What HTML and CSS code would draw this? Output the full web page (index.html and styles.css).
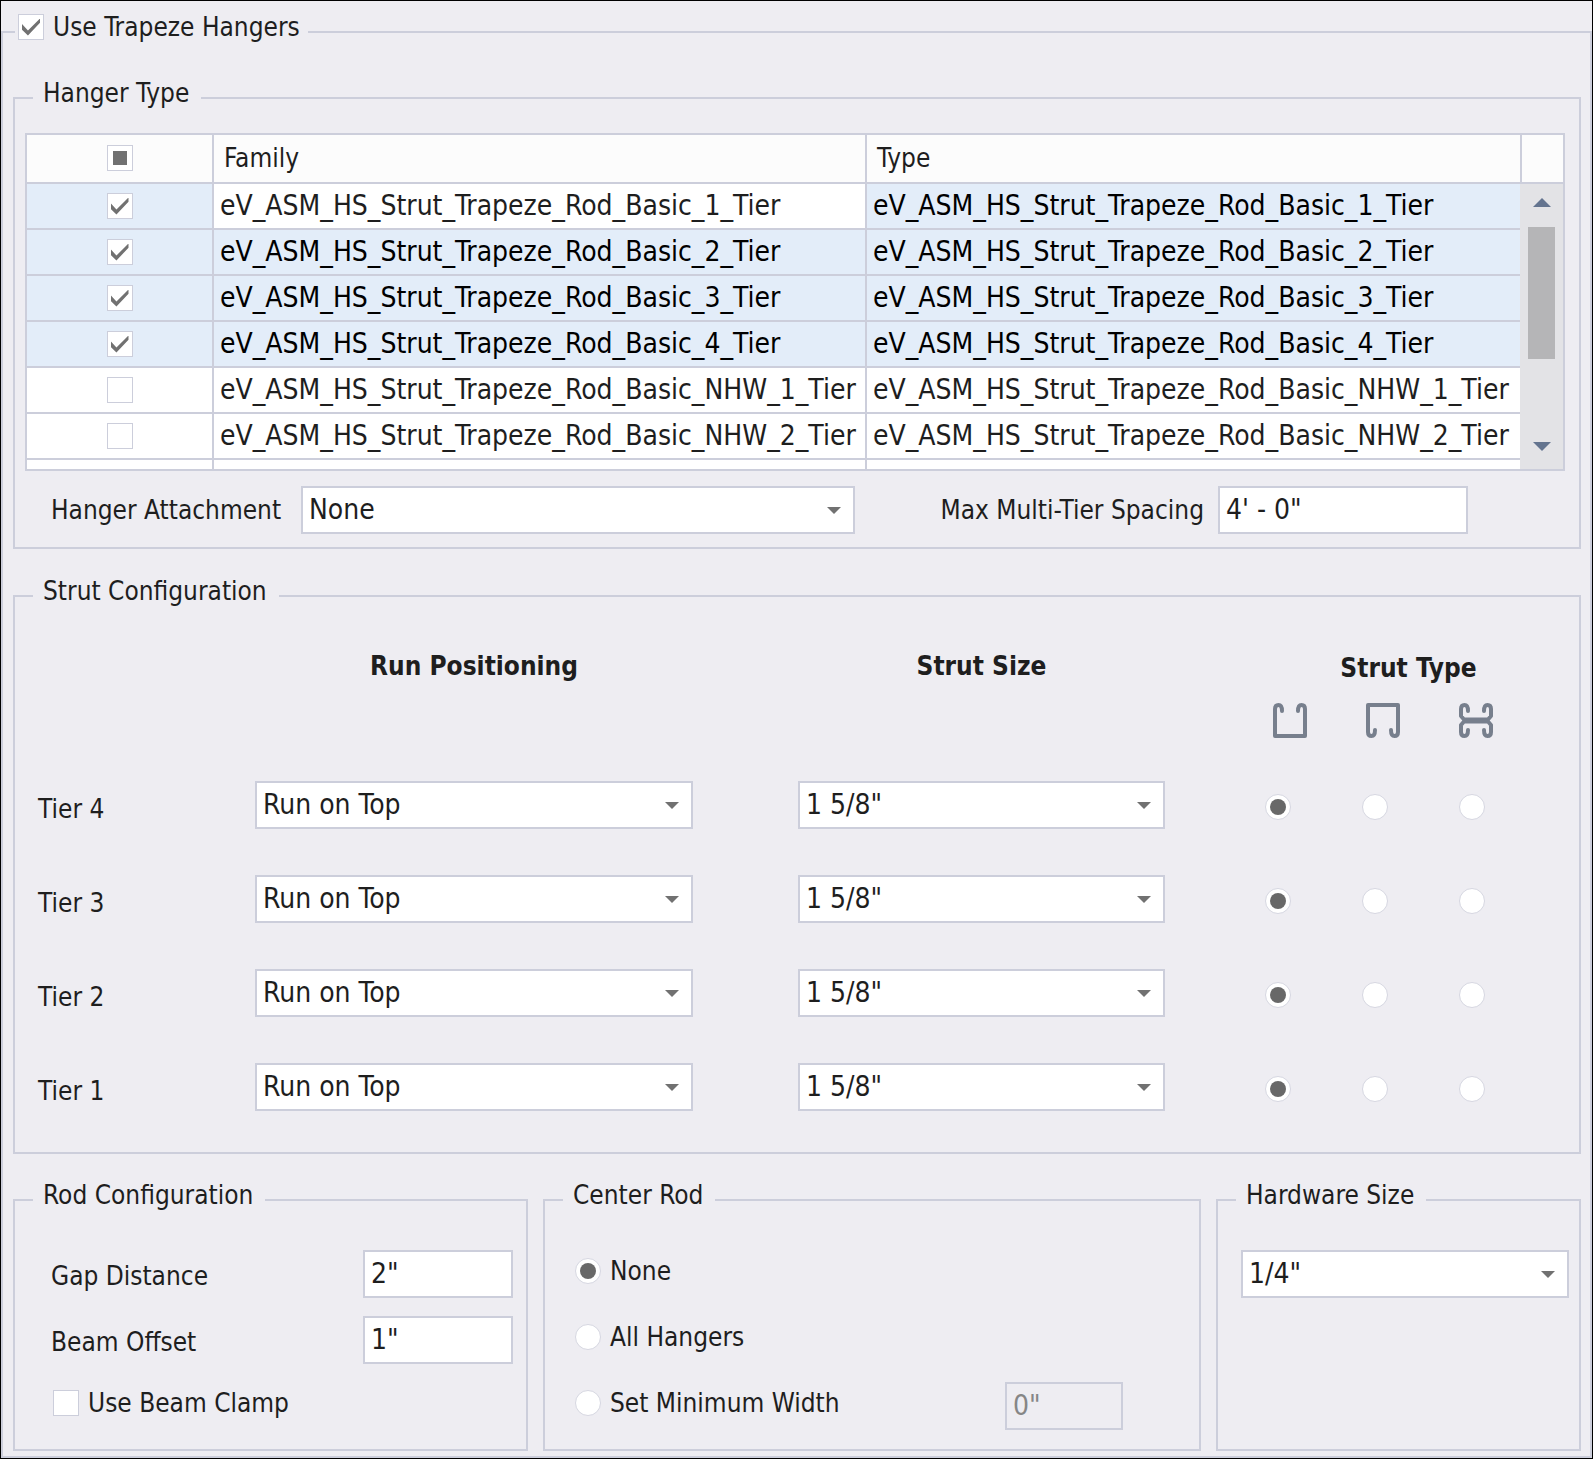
FILE: index.html
```
<!DOCTYPE html>
<html lang="en">
<head>
    <meta charset="UTF-8">
    <meta name="viewport" content="width=device-width, initial-scale=1.0">
    <title>Trapeze Hangers</title>
    <link rel="stylesheet" href="styles.css">
</head>
<body>
    <fieldset class="group main">
        <legend class="legend legend-check">
            <label class="choice"><input type="checkbox" class="check" checked>Use Trapeze Hangers</label>
        </legend>

        <fieldset class="group hanger-type">
            <legend class="legend">Hanger Type</legend>
            <div class="content">
                <div class="list">
                    <div class="list-rows">
                        <table class="families">
                            <thead>
                                <tr>
                                    <th class="col-check"><input type="checkbox" class="check mixed" aria-label="Select all"></th>
                                    <th>Family</th>
                                    <th>Type</th>
                                </tr>
                            </thead>
                            <tbody>
                                <tr class="selected">
                                    <td class="col-check"><input type="checkbox" class="check" aria-label="Basic 1 Tier" checked></td>
                                    <td class="focused">eV_ASM_HS_Strut_Trapeze_Rod_Basic_1_Tier</td>
                                    <td>eV_ASM_HS_Strut_Trapeze_Rod_Basic_1_Tier</td>
                                </tr>
                                <tr class="selected">
                                    <td class="col-check"><input type="checkbox" class="check" aria-label="Basic 2 Tier" checked></td>
                                    <td>eV_ASM_HS_Strut_Trapeze_Rod_Basic_2_Tier</td>
                                    <td>eV_ASM_HS_Strut_Trapeze_Rod_Basic_2_Tier</td>
                                </tr>
                                <tr class="selected">
                                    <td class="col-check"><input type="checkbox" class="check" aria-label="Basic 3 Tier" checked></td>
                                    <td>eV_ASM_HS_Strut_Trapeze_Rod_Basic_3_Tier</td>
                                    <td>eV_ASM_HS_Strut_Trapeze_Rod_Basic_3_Tier</td>
                                </tr>
                                <tr class="selected">
                                    <td class="col-check"><input type="checkbox" class="check" aria-label="Basic 4 Tier" checked></td>
                                    <td>eV_ASM_HS_Strut_Trapeze_Rod_Basic_4_Tier</td>
                                    <td>eV_ASM_HS_Strut_Trapeze_Rod_Basic_4_Tier</td>
                                </tr>
                                <tr>
                                    <td class="col-check"><input type="checkbox" class="check" aria-label="Basic NHW 1 Tier"></td>
                                    <td>eV_ASM_HS_Strut_Trapeze_Rod_Basic_NHW_1_Tier</td>
                                    <td>eV_ASM_HS_Strut_Trapeze_Rod_Basic_NHW_1_Tier</td>
                                </tr>
                                <tr>
                                    <td class="col-check"><input type="checkbox" class="check" aria-label="Basic NHW 2 Tier"></td>
                                    <td>eV_ASM_HS_Strut_Trapeze_Rod_Basic_NHW_2_Tier</td>
                                    <td>eV_ASM_HS_Strut_Trapeze_Rod_Basic_NHW_2_Tier</td>
                                </tr>
                                <tr>
                                    <td class="col-check"></td>
                                    <td></td>
                                    <td></td>
                                </tr>
                            </tbody>
                        </table>
                    </div>
                    <div class="list-side">
                        <div class="side-head"></div>
                        <div class="scrollbar">
                            <button type="button" class="scroll-up" aria-label="Scroll up"></button>
                            <div class="thumb"></div>
                            <button type="button" class="scroll-down" aria-label="Scroll down"></button>
                        </div>
                    </div>
                </div>
                <div class="attachment">
                    <label for="attachment">Hanger Attachment</label>
                    <div class="select">
                        <select id="attachment"><option>None</option></select>
                    </div>
                    <label for="spacing" class="label-right">Max Multi-Tier Spacing</label>
                    <input type="text" id="spacing" class="text" value="4' - 0&quot;">
                </div>
            </div>
        </fieldset>

        <fieldset class="group strut">
            <legend class="legend">Strut Configuration</legend>
            <div class="content">
                <div class="strut-row strut-head">
                    <div class="head col-run">Run Positioning</div>
                    <div class="head col-size">Strut Size</div>
                    <div class="col-type">
                        <div class="head head-type">Strut Type</div>
                        <div class="icons">
                            <svg class="icon" viewBox="0 0 34 35">
                                <path d="M9 8C9 4 8 2 5.5 2S2 3.5 2 6V33H32V6C32 3.5 31 2 28.5 2S25 4 25 8"/>
                            </svg>
                            <svg class="icon" viewBox="0 0 34 35">
                                <path d="M9 27C9 31 8 33 5.5 33S2 31.5 2 29V2H32V29C32 31.5 31 33 28.5 33S25 31 25 27"/>
                            </svg>
                            <svg class="icon" viewBox="0 0 34 35">
                                <path d="M9 8C9 4 8 2 5.5 2S2 3.5 2 6V13L5 16.5H29L32 13V6C32 3.5 31 2 28.5 2S25 4 25 8"/>
                                <path d="M9 27C9 31 8 33 5.5 33S2 31.5 2 29V22L5 18.5H29L32 22V29C32 31.5 31 33 28.5 33S25 31 25 27"/>
                            </svg>
                        </div>
                    </div>
                </div>
                <div class="strut-row">
                    <label for="run4" class="tier">Tier 4</label>
                    <div class="select col-run"><select id="run4"><option>Run on Top</option></select></div>
                    <div class="select col-size"><select aria-label="Tier 4 strut size"><option>1 5/8"</option></select></div>
                    <div class="col-type radios">
                        <input type="radio" class="radio" name="type4" aria-label="Open up" checked>
                        <input type="radio" class="radio" name="type4" aria-label="Open down">
                        <input type="radio" class="radio" name="type4" aria-label="Back to back">
                    </div>
                </div>
                <div class="strut-row">
                    <label for="run3" class="tier">Tier 3</label>
                    <div class="select col-run"><select id="run3"><option>Run on Top</option></select></div>
                    <div class="select col-size"><select aria-label="Tier 3 strut size"><option>1 5/8"</option></select></div>
                    <div class="col-type radios">
                        <input type="radio" class="radio" name="type3" aria-label="Open up" checked>
                        <input type="radio" class="radio" name="type3" aria-label="Open down">
                        <input type="radio" class="radio" name="type3" aria-label="Back to back">
                    </div>
                </div>
                <div class="strut-row">
                    <label for="run2" class="tier">Tier 2</label>
                    <div class="select col-run"><select id="run2"><option>Run on Top</option></select></div>
                    <div class="select col-size"><select aria-label="Tier 2 strut size"><option>1 5/8"</option></select></div>
                    <div class="col-type radios">
                        <input type="radio" class="radio" name="type2" aria-label="Open up" checked>
                        <input type="radio" class="radio" name="type2" aria-label="Open down">
                        <input type="radio" class="radio" name="type2" aria-label="Back to back">
                    </div>
                </div>
                <div class="strut-row">
                    <label for="run1" class="tier">Tier 1</label>
                    <div class="select col-run"><select id="run1"><option>Run on Top</option></select></div>
                    <div class="select col-size"><select aria-label="Tier 1 strut size"><option>1 5/8"</option></select></div>
                    <div class="col-type radios">
                        <input type="radio" class="radio" name="type1" aria-label="Open up" checked>
                        <input type="radio" class="radio" name="type1" aria-label="Open down">
                        <input type="radio" class="radio" name="type1" aria-label="Back to back">
                    </div>
                </div>
            </div>
        </fieldset>

        <div class="bottom">
            <fieldset class="group rod">
                <legend class="legend">Rod Configuration</legend>
                <div class="rows">
                    <div class="row">
                        <label for="gap" class="row-label">Gap Distance</label>
                        <input type="text" id="gap" class="text" value="2&quot;">
                    </div>
                    <div class="row">
                        <label for="offset" class="row-label">Beam Offset</label>
                        <input type="text" id="offset" class="text" value="1&quot;">
                    </div>
                    <div class="row">
                        <label class="choice clamp"><input type="checkbox" class="check">Use Beam Clamp</label>
                    </div>
                </div>
            </fieldset>

            <fieldset class="group center-rod">
                <legend class="legend">Center Rod</legend>
                <div class="rows">
                    <div class="row">
                        <label class="choice"><input type="radio" class="radio" name="center" checked>None</label>
                    </div>
                    <div class="row">
                        <label class="choice"><input type="radio" class="radio" name="center">All Hangers</label>
                    </div>
                    <div class="row">
                        <label class="choice"><input type="radio" class="radio" name="center">Set Minimum Width</label>
                        <input type="text" class="text" aria-label="Minimum width" value="0&quot;" disabled>
                    </div>
                </div>
            </fieldset>

            <fieldset class="group hardware">
                <legend class="legend">Hardware Size</legend>
                <div class="rows">
                    <div class="select">
                        <select aria-label="Hardware size"><option>1/4"</option></select>
                    </div>
                </div>
            </fieldset>
        </div>
    </fieldset>
</body>
</html>
```

FILE: styles.css
```
*{
    box-sizing: border-box;
}
body{
    margin: 0px;
    padding-top: 10px;
    min-height: 100vh;
    border: 1px solid #000;
    background-color: #eeedf2;
    color: #1e1e1e;
    font-family: "DejaVu Sans Condensed", "DejaVu Sans", Tahoma, sans-serif;
    font-size: 26px;
    line-height: 32px;
}

/* group boxes */
.group{
    min-width: 0px;
    margin: 0px;
    padding: 0px;
    border: 2px solid #cccedb;
}
.legend{
    margin-left: 18px;
    padding: 0px 12px 10px 10px;
}
.main{
    padding: 24px 9px 5px 10px;
}
.legend-check{
    margin-left: 2px;
    padding: 0px 8px 10px 3px;
}

/* form controls */
.select{
    position: relative;
}
.select::after{
    content: "";
    position: absolute;
    right: 14px;
    top: 21px;
    border: 7px solid transparent;
    border-top-color: #717171;
    border-bottom: 0px;
    pointer-events: none;
}
.select select, .text{
    display: block;
    width: 100%;
    height: 48px;
    padding: 0px 6px 2px;
    border: 2px solid #cccedb;
    border-radius: 0px;
    background-color: #fff;
    color: #1e1e1e;
    font-family: inherit;
    font-size: 28px;
    appearance: none;
}
.text:disabled{
    background-color: transparent;
    color: #868686;
}
.check, .radio{
    flex: none;
    display: grid;
    place-content: center;
    width: 26px;
    height: 26px;
    margin: 0px;
    border: 1px solid #cccedb;
    background-color: #fff;
    appearance: none;
}
.check:checked::before{
    content: "";
    width: 18px;
    height: 17px;
    background-color: #717171;
    clip-path: polygon(0 33%, 33% 70%, 100% 0, 100% 25%, 33% 100%, 0 66%);
}
.mixed::before{
    content: "";
    width: 14px;
    height: 14px;
    background-color: #717171;
}
.radio{
    border-color: #d6d7e1;
    border-radius: 50%;
}
.radio:checked::before{
    content: "";
    width: 16px;
    height: 16px;
    border-radius: 50%;
    background-color: #686868;
}
.choice{
    display: flex;
    align-items: center;
    gap: 9px;
}

/* hanger type */
.hanger-type .content{
    padding: 14px 14px 13px 10px;
}
.list{
    display: flex;
    height: 338px;
    border: 2px solid #cccedb;
    background-color: #fff;
}
.list-rows{
    flex: 1;
    overflow: hidden;
}
.families{
    width: 100%;
    table-layout: fixed;
    border-collapse: separate;
    border-spacing: 0px;
}
.families th{
    height: 49px;
    padding: 0px 10px 2px;
    border-right: 2px solid #cccedb;
    border-bottom: 2px solid #cccedb;
    background-color: #fcfcfc;
    font-weight: normal;
    text-align: left;
}
.families td{
    height: 46px;
    padding: 0px 6px;
    border-right: 2px solid #cccedb;
    border-bottom: 2px solid #cccedb;
    font-size: 28px;
    white-space: nowrap;
}
.families th:last-child, .families td:last-child{
    border-right: 0px;
}
.families .col-check{
    width: 187px;
}
.col-check .check{
    margin: 0px auto;
}
.selected td{
    background-color: #e3edf9;
    color: #000;
}
.selected .focused{
    background-color: #fff;
    color: #1e1e1e;
}
.list-side{
    display: flex;
    flex-direction: column;
    width: 43px;
}
.side-head{
    height: 49px;
    border-left: 2px solid #cccedb;
    border-bottom: 2px solid #cccedb;
    background-color: #fcfcfc;
}
.scrollbar{
    flex: 1;
    display: flex;
    flex-direction: column;
    align-items: center;
    background-color: #e3e3e6;
}
.scroll-up, .scroll-down{
    display: grid;
    place-content: center;
    width: 100%;
    height: 36px;
    padding: 0px;
    border: 0px;
    background-color: transparent;
}
.scroll-up::before, .scroll-down::before{
    content: "";
    border: 9px solid transparent;
    border-top-width: 0px;
    border-bottom-color: #64748f;
}
.scroll-down{
    height: 46px;
    margin-top: auto;
}
.scroll-down::before{
    border-width: 9px 9px 0px;
    border-top-color: #64748f;
}
.thumb{
    width: 27px;
    height: 132px;
    margin-top: 7px;
    background-color: #b5b5b7;
}
.attachment{
    display: grid;
    grid-template-columns: 250px 554fr 363px 250fr;
    align-items: center;
    margin-top: 15px;
    padding: 0px 97px 0px 26px;
}
.label-right{
    padding-right: 14px;
    text-align: right;
}

/* strut configuration */
.strut{
    margin-top: 26px;
}
.strut .content{
    padding: 33px 59px 41px 23px;
}
.strut-row{
    display: grid;
    grid-template-columns: 217px 438fr 105px 367fr 64px 291px;
    align-items: center;
    margin-bottom: 46px;
}
.strut-row:last-child{
    margin-bottom: 0px;
}
.strut-head{
    align-items: start;
    margin-bottom: 43px;
}
.col-run{
    grid-column: 2;
}
.col-size{
    grid-column: 4;
}
.col-type{
    grid-column: 6;
}
.head{
    font-weight: bold;
    text-align: center;
}
.head-type{
    padding: 2px 0px 2px 68px;
}
.icons{
    display: flex;
    gap: 59px;
    margin-top: 17px;
    padding-left: 44px;
}
.icon{
    width: 34px;
    height: 35px;
    fill: none;
    stroke: #777f8d;
    stroke-width: 4;
    stroke-linecap: round;
    stroke-linejoin: round;
}
.radios, .row-label{
    margin-top: 4px;
}
.tier{
    margin-top: 8px;
}
.radios{
    display: grid;
    grid-template-columns: repeat(3, 1fr);
    justify-items: center;
}

/* bottom groups */
.bottom{
    display: grid;
    grid-template-columns: 515fr 658fr 365fr;
    gap: 15px;
    margin-top: 25px;
}
.rows{
    display: flex;
    flex-direction: column;
    gap: 18px;
    padding: 29px 0px 19px;
}
.row{
    display: flex;
    align-items: center;
    justify-content: space-between;
    height: 48px;
}
.row .choice{
    padding-bottom: 6px;
}
.rod .rows{
    padding-left: 36px;
    padding-right: 13px;
}
.rod .text{
    width: 150px;
}
.clamp{
    margin-left: 2px;
}
.center-rod .rows{
    padding-left: 30px;
    padding-right: 76px;
}
.center-rod .text{
    width: 118px;
}
.hardware .rows{
    padding-left: 23px;
    padding-right: 10px;
}
```
